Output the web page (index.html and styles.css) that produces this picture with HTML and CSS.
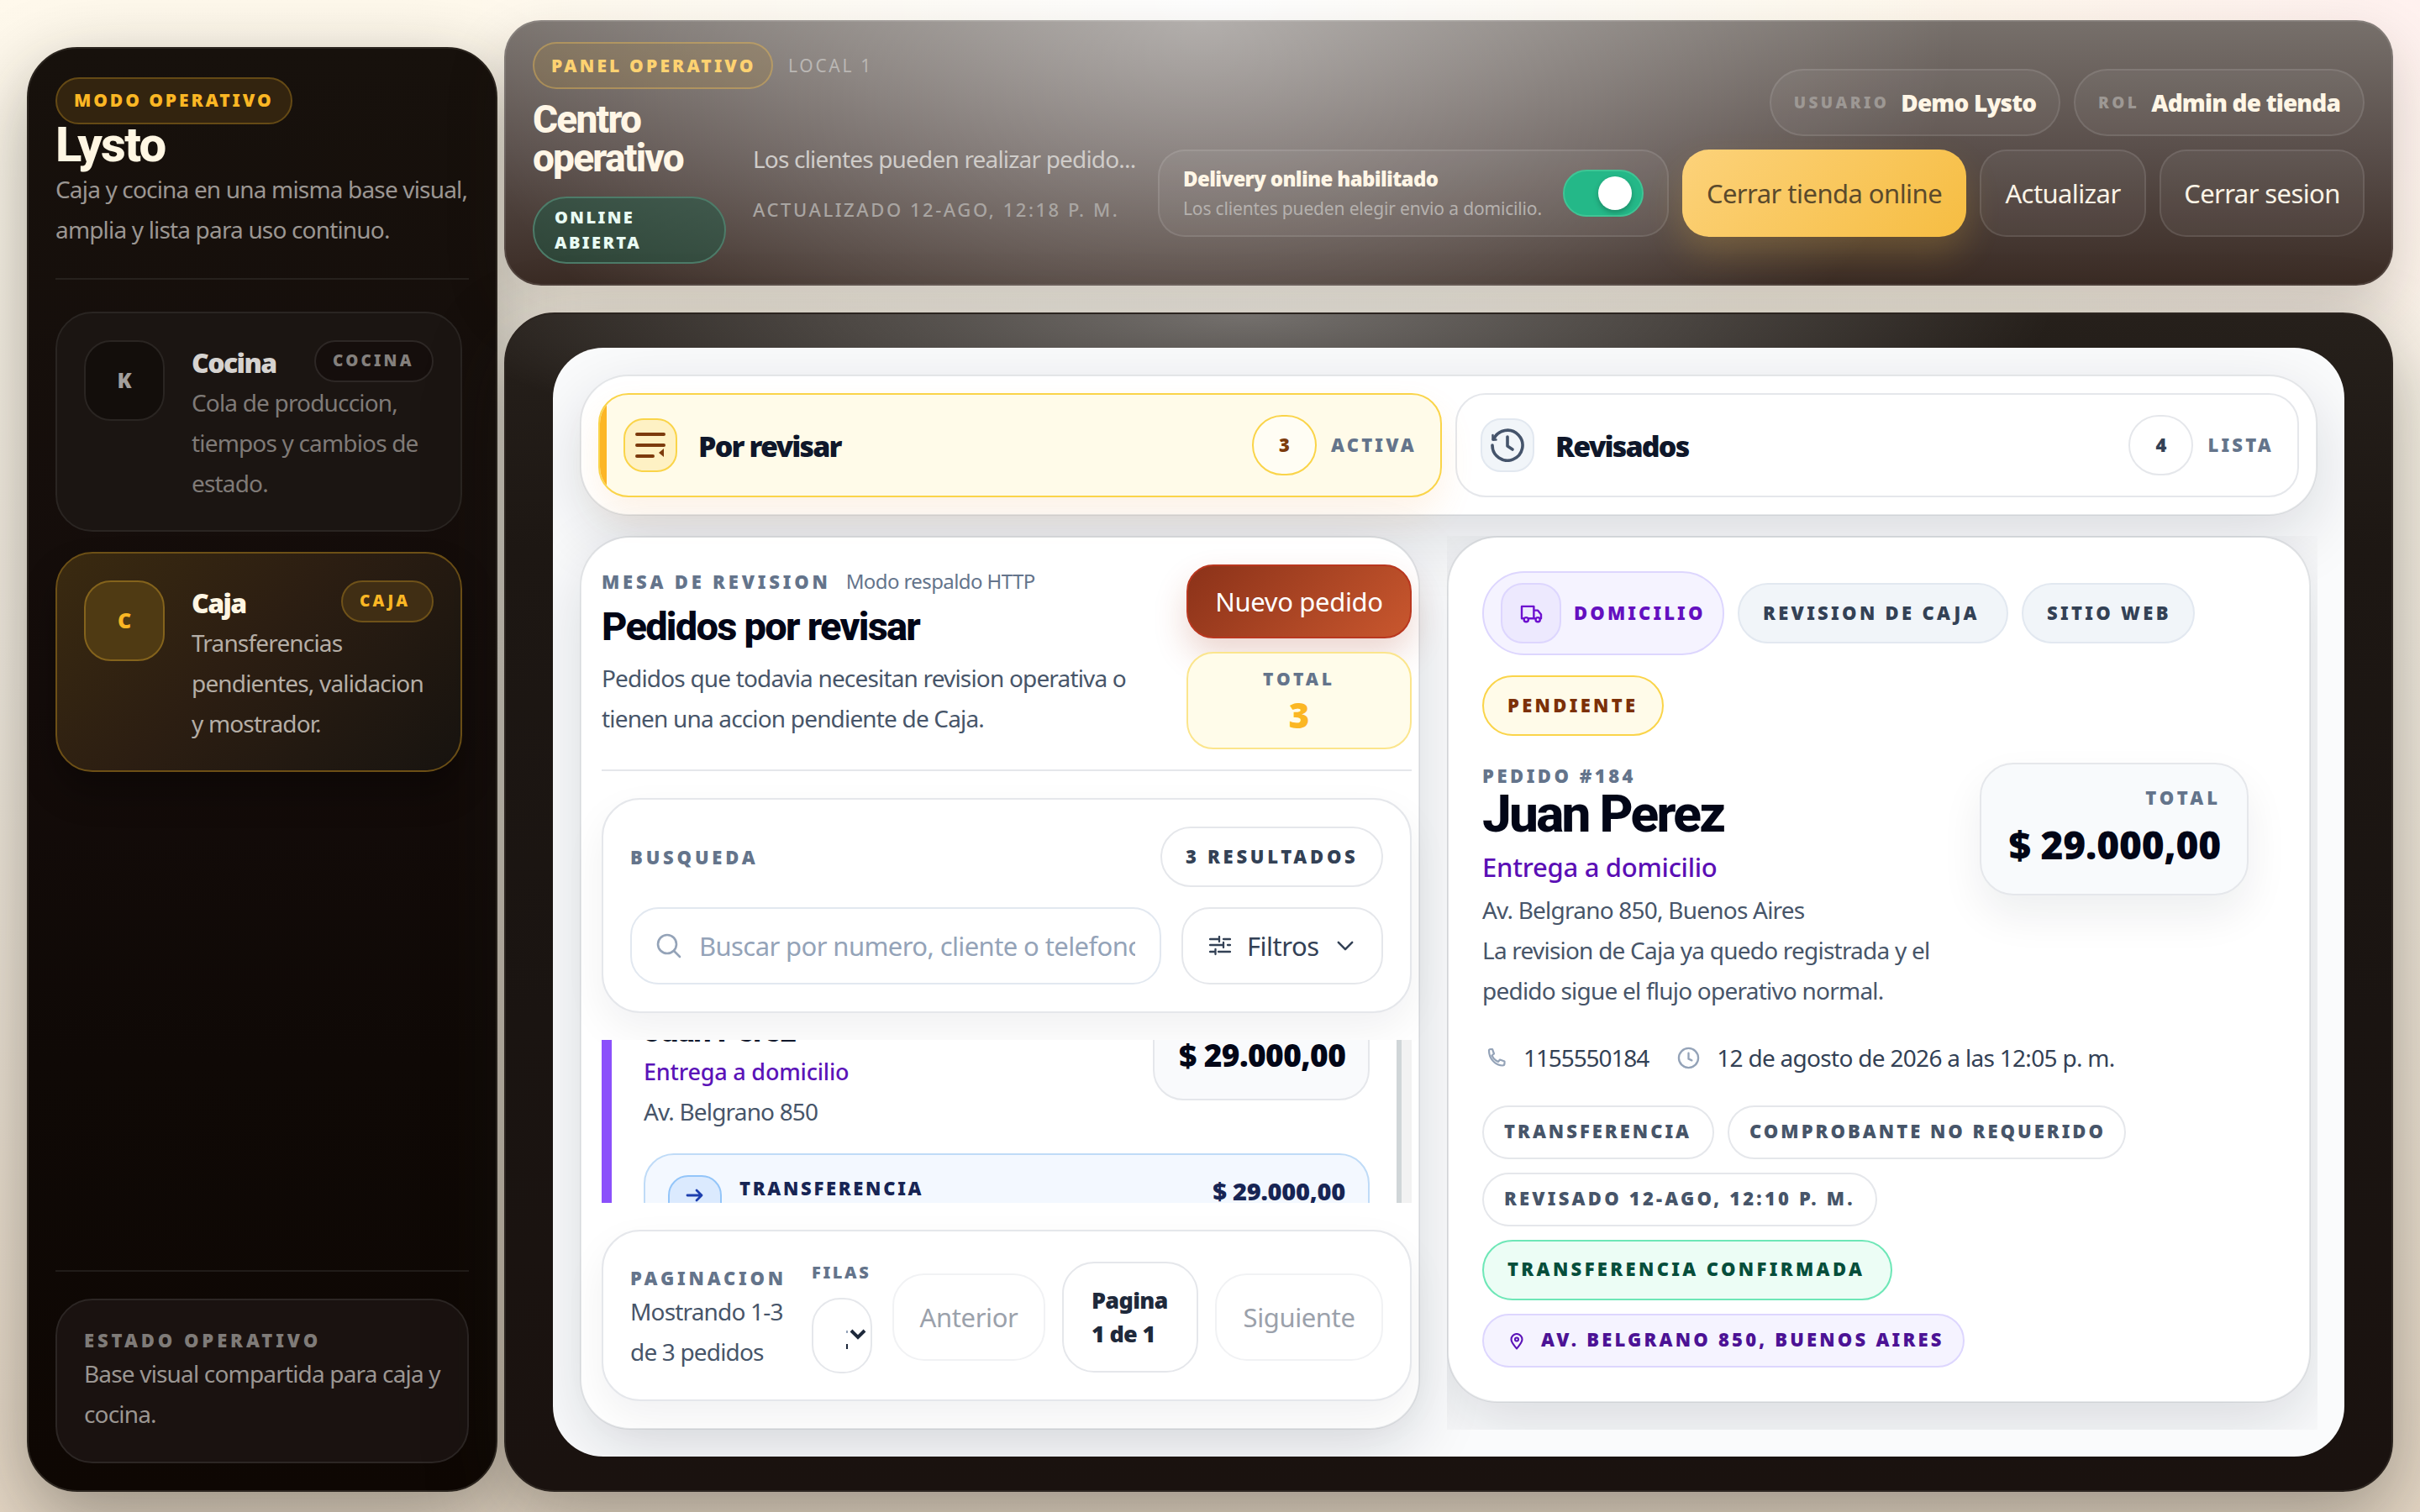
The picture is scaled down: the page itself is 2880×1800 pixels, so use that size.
FILE: index.html
```html
<!DOCTYPE html>
<html lang="es">
<head>
<meta charset="UTF-8">
<meta name="viewport" content="width=device-width, initial-scale=1.0">
<title>Lysto - Caja</title>
<link rel="stylesheet" href="styles.css">
</head>
<body>

<div class="shell">
    <aside class="sidebar">
        <div class="brand">
            <span class="badge badge-gold">MODO OPERATIVO</span>
            <h1>Lysto</h1>
            <p class="copy">Caja y cocina en una misma base visual,<br>amplia y lista para uso continuo.</p>
        </div>

        <nav class="nav">
            <a class="nav-card">
                <span class="nav-icon">K</span>
                <div class="nav-body">
                    <div class="nav-head"><strong>Cocina</strong><span class="nav-chip">COCINA</span></div>
                    <p class="copy">Cola de produccion,<br>tiempos y cambios de<br>estado.</p>
                </div>
            </a>
            <a class="nav-card active">
                <span class="nav-icon">C</span>
                <div class="nav-body">
                    <div class="nav-head"><strong>Caja</strong><span class="nav-chip">CAJA</span></div>
                    <p class="copy">Transferencias<br>pendientes, validacion<br>y mostrador.</p>
                </div>
            </a>
        </nav>

        <div class="side-footer">
            <div class="side-status">
                <div class="side-label">ESTADO OPERATIVO</div>
                <p class="copy">Base visual compartida para caja y<br>cocina.</p>
            </div>
        </div>
    </aside>

    <div class="content">
        <header class="topbar">
            <div class="top-left">
                <div class="top-badges">
                    <span class="badge badge-panel">PANEL OPERATIVO</span>
                    <span class="local">LOCAL 1</span>
                </div>
                <div class="top-info">
                    <div class="top-title">
                        <h2>Centro<br>operativo</h2>
                        <div class="online">ONLINE<br>ABIERTA</div>
                    </div>
                    <div class="top-status">
                        <p class="top-text">Los clientes pueden realizar pedido...</p>
                        <p class="top-updated">ACTUALIZADO 12-AGO, 12:18 P. M.</p>
                    </div>
                </div>
            </div>
            <div class="top-right">
                <div class="top-row">
                    <div class="who"><span>USUARIO</span><strong>Demo Lysto</strong></div>
                    <div class="who"><span>ROL</span><strong>Admin de tienda</strong></div>
                </div>
                <div class="top-row">
                    <div class="delivery">
                        <div>
                            <strong>Delivery online habilitado</strong>
                            <p>Los clientes pueden elegir envio a domicilio.</p>
                        </div>
                        <span class="toggle"></span>
                    </div>
                    <button class="top-btn btn-gold">Cerrar tienda online</button>
                    <button class="top-btn btn-refresh">Actualizar</button>
                    <button class="top-btn btn-logout">Cerrar sesion</button>
                </div>
            </div>
        </header>

        <main class="main">
            <div class="board">
                <div class="tabs">
                    <div class="tab tab-active">
                        <span class="tab-icon">
                            <svg width="40" height="40" viewBox="0 0 40 40" fill="none" stroke="#7c3a0c" stroke-width="4" stroke-linecap="round"><path d="M4 7h32M4 20h32M4 33h19"/><path d="M36 24v10l-6-5z" fill="#7c3a0c" stroke="none"/></svg>
                        </span>
                        <strong>Por revisar</strong>
                        <span class="count">3</span>
                        <span class="tab-label">ACTIVA</span>
                    </div>
                    <div class="tab">
                        <span class="tab-icon">
                            <svg width="40" height="40" viewBox="0 0 40 40" fill="none" stroke="#45546b" stroke-width="3.6" stroke-linecap="round" stroke-linejoin="round"><path d="M3.5 13A18 18 0 1 1 2 20"/><path d="M2.5 8v5.500h4" stroke-width="2.500"/><path d="M20 10v11l6 4"/></svg>
                        </span>
                        <strong>Revisados</strong>
                        <span class="count">4</span>
                        <span class="tab-label">LISTA</span>
                    </div>
                </div>

                <div class="panels">
                    <section class="panel queue">
                        <div class="queue-head">
                            <div class="queue-intro">
                                <div class="eyebrow-row"><span class="eyebrow">MESA DE REVISION</span><span class="mode">Modo respaldo HTTP</span></div>
                                <h3>Pedidos por revisar</h3>
                                <p class="copy">Pedidos que todavia necesitan revision operativa o<br>tienen una accion pendiente de Caja.</p>
                            </div>
                            <div class="queue-side">
                                <button class="btn-new">Nuevo pedido</button>
                                <div class="total-mini"><span>TOTAL</span><strong>3</strong></div>
                            </div>
                        </div>

                        <div class="search-card">
                            <div class="search-top">
                                <span class="eyebrow">BUSQUEDA</span>
                                <span class="results">3 RESULTADOS</span>
                            </div>
                            <div class="search-row">
                                <div class="search-input">
                                    <svg width="30" height="30" viewBox="0 0 30 30" fill="none" stroke="#94a3b8" stroke-width="2.600" stroke-linecap="round"><circle cx="13" cy="13" r="11"/><path d="M21.500 21.500L28 28"/></svg>
                                    <span>Buscar por numero, cliente o telefono</span>
                                </div>
                                <button class="btn-filter">
                                    <svg width="26" height="24" viewBox="0 0 26 24" fill="none" stroke="#334155" stroke-width="2.300" stroke-linecap="round"><path d="M1 4h11M17 4h8M12 1v6M1 11h16M22 11h3M17 8v6M1 19h5M11 19h14M7.500 16v6"/></svg>
                                    <span>Filtros</span>
                                    <svg width="20" height="13" viewBox="0 0 22 14" fill="none" stroke="#334155" stroke-width="2.800" stroke-linecap="round" stroke-linejoin="round"><path d="M2 2l9 9 9-9"/></svg>
                                </button>
                            </div>
                        </div>

                        <div class="list">
                            <article class="order">
                                <div class="order-top">
                                    <div>
                                        <h4>Juan Perez</h4>
                                        <p class="order-type">Entrega a domicilio</p>
                                        <p class="copy">Av. Belgrano 850</p>
                                    </div>
                                    <div class="order-price">$ 29.000,00</div>
                                </div>
                                <div class="transfer">
                                    <span class="transfer-icon">
                                        <svg width="22" height="18" viewBox="0 0 22 18" fill="none" stroke="#1d3fae" stroke-width="2.800" stroke-linecap="round" stroke-linejoin="round"><path d="M2 9h17M13 3l6 6-6 6"/></svg>
                                    </span>
                                    <span class="transfer-name">TRANSFERENCIA</span>
                                    <span class="transfer-price">$ 29.000,00</span>
                                </div>
                            </article>
                        </div>

                        <div class="pager">
                            <div class="pager-info">
                                <div class="eyebrow">PAGINACION</div>
                                <p class="copy">Mostrando 1-3<br>de 3 pedidos</p>
                            </div>
                            <div class="rows">
                                <span>FILAS</span>
                                <div class="rows-select">
                                    <i></i>
                                    <svg width="20" height="13" viewBox="0 0 20 13" fill="none" stroke="#1e293b" stroke-width="4"><path d="M2 2l8 8 8-8"/></svg>
                                </div>
                            </div>
                            <button class="page-btn btn-prev">Anterior</button>
                            <div class="page-now">Pagina<br>1 de 1</div>
                            <button class="page-btn btn-next">Siguiente</button>
                        </div>
                    </section>

                    <div class="detail-wrap">
                        <section class="panel detail">
                            <div class="tags">
                                <span class="tag tag-home">
                                    <span class="tag-icon">
                                        <svg width="27" height="23" viewBox="0 0 28 24" fill="none" stroke="#6d10cf" stroke-width="2.500" stroke-linejoin="round"><path d="M5 18H2V3h15v15h-7M17 8h5l4 5v5h-1M17 18h2"/><circle cx="7.500" cy="19.500" r="2.700"/><circle cx="22" cy="19.500" r="2.700"/></svg>
                                    </span>
                                    <b>DOMICILIO</b>
                                </span>
                                <span class="tag tag-review"><b>REVISION DE CAJA</b></span>
                                <span class="tag tag-web"><b>SITIO WEB</b></span>
                                <span class="tag tag-pending"><b>PENDIENTE</b></span>
                            </div>

                            <div class="detail-top">
                                <div class="detail-name">
                                    <div class="order-number">PEDIDO #184</div>
                                    <h3>Juan Perez</h3>
                                    <p class="detail-type">Entrega a domicilio</p>
                                    <p class="copy">Av. Belgrano 850, Buenos Aires<br>La revision de Caja ya quedo registrada y el<br>pedido sigue el flujo operativo normal.</p>
                                </div>
                                <div class="detail-total"><span>TOTAL</span><strong>$ 29.000,00</strong></div>
                            </div>

                            <div class="meta">
                                <svg width="24" height="24" viewBox="0 0 24 24" fill="none" stroke="#94a3b8" stroke-width="2.200" stroke-linejoin="round"><path d="M3 3.500C3 2.500 4 2 5 2h2l2 5.500-2.500 2C8 13 10.500 15.500 14 17l2-2.500 5.500 2V19c0 1.500-1 2.500-2.500 2.500C10 21 3 13 3 3.500z"/></svg>
                                <span class="phone">1155550184</span>
                                <svg width="27" height="27" viewBox="0 0 28 28" fill="none" stroke="#94a3b8" stroke-width="2.400" stroke-linecap="round"><circle cx="14" cy="14" r="12"/><path d="M14 8v7l4 2"/></svg>
                                <span class="date">12 de agosto de 2026 a las 12:05 p. m.</span>
                            </div>

                            <div class="chips">
                                <span class="chip chip-transfer">TRANSFERENCIA</span>
                                <span class="chip chip-proof">COMPROBANTE NO REQUERIDO</span>
                                <span class="chip chip-reviewed">REVISADO 12-AGO, 12:10 P. M.</span>
                                <span class="chip chip-ok">TRANSFERENCIA CONFIRMADA</span>
                                <span class="chip chip-address">
                                    <svg width="16" height="20" viewBox="0 0 16 20" fill="none" stroke="#5b13b8" stroke-width="2.100" stroke-linejoin="round"><path d="M8 18.500C4 13.500 1.500 11 1.500 7.500a6.500 6.500 0 0 1 13 0C14.500 11 12 13.500 8 18.500z"/><circle cx="8" cy="7.500" r="2"/></svg>
                                    AV. BELGRANO 850, BUENOS AIRES
                                </span>
                            </div>
                        </section>
                    </div>
                </div>
            </div>
        </main>
    </div>
</div>

</body>
</html>
```
FILE: styles.css
```css
* {
  box-sizing: border-box;
  margin: 0;
  padding: 0;
}

body {
  width: 2880px;
  height: 1800px;
  overflow: hidden;
  font-family: "Noto Sans", "Open Sans", sans-serif;
  color: #0f172a;
  background:
    radial-gradient(ellipse 900px 500px at 1450px 0, #ffffff, rgba(255, 255, 255, 0)),
    radial-gradient(ellipse 700px 500px at 2880px 0, #fff1ef, rgba(255, 241, 239, 0)),
    linear-gradient(180deg, #fff9ec 0%, #f2ebdf 45%, #e4d6c4 100%);
}

button {
  font-family: inherit;
  border: none;
}

h1, h2, h3, h4 {
  font-family: Roboto, sans-serif;
  font-weight: 800;
}

.shell {
  display: grid;
  grid-template-columns: 560px 2248px;
  gap: 8px;
  height: 1800px;
  padding: 24px 32px;
}

.copy {
  font-size: 28px;
  line-height: 48px;
  letter-spacing: -0.830px;
  white-space: nowrap;
}

/* sidebar */
.sidebar {
  display: flex;
  flex-direction: column;
  margin-top: 32px;
  padding: 34px 32px 32px;
  border: 2px solid #2b251f;
  border-radius: 60px;
  background: linear-gradient(180deg, #17110c 0%, #140c0a 45%, #0f0906 70%, #0e0703 100%);
  box-shadow: 0 30px 90px rgba(25, 25, 20, 0.38);
  color: #9b9692;
}

.brand {
  padding-bottom: 34px;
  border-bottom: 2px solid #26211d;
}

.badge {
  display: flex;
  align-items: center;
  height: 56px;
  border: 2px solid;
  border-radius: 28px;
  font-size: 21px;
  font-weight: 900;
  white-space: nowrap;
}

.badge-gold {
  width: 282px;
  padding: 0 0 3px 20px;
  border-color: #654a15;
  background: #33240f;
  color: #fbb724;
  letter-spacing: 2.900px;
}

.brand h1 {
  margin-top: -5px;
  font-size: 58px;
  line-height: 58px;
  letter-spacing: -1.700px;
  color: #fff6e3;
}

.nav {
  display: flex;
  flex-direction: column;
  gap: 24px;
  margin: 38px 8px 0 0;
}

.nav-card {
  display: flex;
  gap: 32px;
  height: 262px;
  padding: 32px;
  border: 2px solid #2a2522;
  border-radius: 44px;
  background: #1b1512;
  color: #7f7a77;
}

.nav-icon {
  display: flex;
  align-items: center;
  justify-content: center;
  width: 96px;
  height: 96px;
  padding-bottom: 2px;
  border: 2px solid #2a2522;
  border-radius: 32px;
  background: #130e0b;
  color: #a3a09d;
  font-size: 25px;
  font-weight: 900;
}

.nav-body {
  flex: 1;
}

.nav-head {
  display: flex;
  align-items: center;
  justify-content: space-between;
  height: 50px;
}

.nav-head strong {
  padding-top: 3px;
  font-size: 32px;
  font-weight: 900;
  letter-spacing: -1.600px;
  color: #d6d3d0;
}

.nav-chip {
  display: flex;
  align-items: center;
  width: 142px;
  height: 50px;
  padding: 0 0 2px 20px;
  border: 2px solid #2d2725;
  border-radius: 25px;
  background: #150e0c;
  font-size: 19px;
  font-weight: 900;
  letter-spacing: 3.200px;
  color: #84807d;
}

.nav-card.active {
  border-color: #6d5016;
  background: linear-gradient(135deg, #3a2a10 0%, #2c1e12 45%, #181410 100%);
  box-shadow: 0 24px 40px rgba(0, 0, 0, 0.3);
  color: #b5aea6;
}

.active .nav-icon {
  border-color: #84631c;
  background: #4f3a13;
  color: #fbb724;
}

.active strong {
  color: #fff6e3;
}

.active .nav-chip {
  width: 110px;
  border-color: #6f5219;
  background: #402e14;
  color: #fbb724;
}

.side-footer {
  margin-top: auto;
  padding-top: 32px;
  border-top: 2px solid #211c19;
}

.side-status {
  height: 196px;
  padding: 32px;
  border: 2px solid #2c2624;
  border-radius: 44px;
  background: #1a1210;
}

.side-label {
  font-size: 22px;
  line-height: 31px;
  font-weight: 900;
  letter-spacing: 3.900px;
  white-space: nowrap;
  color: #7f7b78;
}

/* top bar */
.content {
  display: flex;
  flex-direction: column;
  gap: 32px;
}

.topbar {
  display: flex;
  align-items: center;
  justify-content: space-between;
  height: 316px;
  padding: 24px 32px;
  border: 2px solid rgba(255, 255, 255, 0.1);
  border-radius: 44px;
  background:
    radial-gradient(ellipse 900px 560px at 830px 0, rgba(255, 255, 255, 0.44), rgba(255, 255, 255, 0)),
    linear-gradient(180deg, #77706b 0%, #594e4a 50%, #3a2b24 100%);
  background-clip: border-box;
  background-origin: border-box;
  box-shadow: 0 30px 70px rgba(40, 30, 20, 0.2);
}

.top-left {
  width: 720px;
}

.top-badges {
  display: flex;
  align-items: center;
  gap: 18px;
}

.badge-panel {
  width: 286px;
  padding-left: 20px;
  border-color: rgba(251, 200, 90, 0.35);
  background: rgba(160, 130, 70, 0.28);
  color: #fdd271;
  letter-spacing: 3.150px;
}

.local {
  font-size: 21px;
  letter-spacing: 2.700px;
  color: #bab7b4;
}

.top-info {
  display: flex;
  gap: 32px;
}

.top-title {
  flex: none;
  width: 230px;
  padding-top: 13px;
}

.top-title h2 {
  font-size: 46px;
  line-height: 46px;
  letter-spacing: -1.800px;
  color: #fff6e6;
}

.online {
  height: 80px;
  margin-top: 23px;
  padding: 8px 24px;
  border: 2px solid #4d7c69;
  border-radius: 40px;
  background: rgba(30, 90, 70, 0.5);
  font-size: 20px;
  line-height: 30px;
  font-weight: 900;
  letter-spacing: 2.400px;
  color: #e9fbf3;
}

.top-status {
  padding-top: 63px;
  white-space: nowrap;
}

.top-text {
  font-size: 28px;
  line-height: 40px;
  letter-spacing: -0.820px;
  color: #cfccc9;
}

.top-updated {
  margin-top: 24px;
  font-size: 22px;
  line-height: 32px;
  font-weight: 500;
  letter-spacing: 2.550px;
  color: #a9a5a2;
}

.top-right {
  display: flex;
  flex-direction: column;
  gap: 16px;
}

.top-row {
  display: flex;
  justify-content: flex-end;
  gap: 16px;
}

.who {
  display: flex;
  align-items: center;
  justify-content: center;
  gap: 14px;
  width: 346px;
  height: 80px;
  border: 2px solid rgba(255, 255, 255, 0.1);
  border-radius: 40px;
  background: rgba(255, 255, 255, 0.05);
  white-space: nowrap;
}

.who span {
  font-size: 19px;
  font-weight: 900;
  letter-spacing: 3.400px;
  color: #9d9894;
}

.who strong {
  font-size: 28px;
  font-weight: 900;
  letter-spacing: -0.850px;
  color: #fff6e6;
}

.delivery {
  display: flex;
  align-items: center;
  justify-content: space-between;
  width: 608px;
  height: 104px;
  padding: 0 28px;
  border: 2px solid rgba(255, 255, 255, 0.1);
  border-radius: 32px;
  background: rgba(255, 255, 255, 0.05);
  white-space: nowrap;
}

.delivery strong {
  display: block;
  font-size: 24px;
  line-height: 36px;
  font-weight: 900;
  letter-spacing: -0.650px;
  color: #fff6e6;
}

.delivery p {
  font-size: 21px;
  line-height: 34px;
  letter-spacing: -0.160px;
  color: #b5b1ae;
}

.toggle {
  width: 96px;
  height: 56px;
  padding: 6px 12px;
  border: 2px solid #3fc595;
  border-radius: 28px;
  background: #24b888;
}

.toggle::after {
  content: "";
  display: block;
  width: 40px;
  height: 40px;
  margin-left: auto;
  border-radius: 50%;
  background: #ffffff;
  box-shadow: 0 3px 6px rgba(0, 0, 0, 0.25);
}

.top-btn {
  height: 104px;
  border: 2px solid rgba(255, 255, 255, 0.1);
  border-radius: 32px;
  background: rgba(255, 255, 255, 0.05);
  font-size: 31px;
  letter-spacing: -0.600px;
  white-space: nowrap;
  color: #fbf3e6;
}

.btn-gold {
  width: 338px;
  border: none;
  background: linear-gradient(135deg, #fcd27a 0%, #f6bd42 100%);
  box-shadow: 0 20px 40px rgba(250, 190, 60, 0.2);
  letter-spacing: -0.550px;
  color: #5b4a2c;
}

.btn-refresh {
  width: 198px;
}

.btn-logout {
  width: 244px;
}

/* board */
.main {
  height: 1404px;
  padding: 40px 56px;
  border: 2px solid #2c2520;
  border-radius: 60px;
  background:
    radial-gradient(ellipse 960px 190px at 880px 0, rgba(255, 255, 255, 0.36), rgba(255, 255, 255, 0)),
    linear-gradient(180deg, #26201b 0%, #1d1713 20%, #1a1411 60%, #1a120f 100%);
  box-shadow: 0 30px 90px rgba(25, 25, 20, 0.36);
}

.board {
  height: 1320px;
  padding: 32px;
  overflow: hidden;
  border-radius: 60px;
  background: #fafbfc;
}

.tabs {
  display: flex;
  gap: 16px;
  height: 168px;
  padding: 20px;
  border: 2px solid rgba(15, 23, 42, 0.08);
  border-radius: 58px;
  background: #ffffff;
  background-clip: padding-box;
  box-shadow: 0 24px 80px rgba(15, 23, 42, 0.14);
}

.tab {
  display: flex;
  align-items: center;
  width: 1004px;
  height: 124px;
  padding: 0 28px;
  border: 2px solid #e5e7eb;
  border-radius: 36px;
}

.tab-active {
  position: relative;
  overflow: hidden;
  border-color: #fad449;
  background: #fffbe9;
  box-shadow: 0 20px 40px rgba(250, 160, 60, 0.12);
}

.tab-active::before {
  content: "";
  position: absolute;
  left: 0;
  top: 0;
  bottom: 0;
  width: 8px;
  background: #fcb626;
}

.tab-icon {
  display: flex;
  align-items: center;
  justify-content: center;
  width: 64px;
  height: 64px;
  border: 2px solid #e2e8f0;
  border-radius: 24px;
  background: #f1f5f9;
}

.tab-active .tab-icon {
  border-color: #fad449;
  background: #fef1c4;
}

.tab strong {
  margin-left: 25px;
  padding-top: 2px;
  font-size: 34px;
  font-weight: 900;
  letter-spacing: -1.850px;
}

.count {
  display: flex;
  align-items: center;
  justify-content: center;
  width: 77px;
  height: 72px;
  margin-left: auto;
  padding-bottom: 2px;
  border: 2px solid #e5e7eb;
  border-radius: 38px;
  background: #ffffff;
  font-size: 22px;
  font-weight: 900;
  color: #334155;
}

.tab-active .count {
  border-color: #fad449;
  background: #fffdf4;
  color: #7c3a0c;
}

.tab-label {
  margin-left: 17px;
  padding-bottom: 2px;
  font-size: 22px;
  font-weight: 900;
  letter-spacing: 3.200px;
  color: #64748b;
}

.panels {
  display: grid;
  grid-template-columns: 1000px 1036px;
  gap: 32px;
  margin-top: 24px;
}

.panel {
  border: 2px solid rgba(15, 23, 42, 0.08);
  border-radius: 60px;
  background: #ffffff;
  background-clip: padding-box;
  box-shadow: 0 24px 80px rgba(15, 23, 42, 0.14);
}

.eyebrow {
  font-size: 22px;
  font-weight: 900;
  letter-spacing: 3.800px;
  white-space: nowrap;
  color: #64748b;
}

/* review queue */
.queue {
  height: 1064px;
  padding: 32px 8px 0 24px;
}

.queue-head {
  display: flex;
  justify-content: space-between;
  height: 246px;
  border-bottom: 2px solid #e5e7eb;
}

.queue .copy {
  color: #475569;
}

.eyebrow-row {
  display: flex;
  align-items: baseline;
  gap: 18px;
  line-height: 40px;
}

.mode {
  font-size: 24px;
  letter-spacing: -0.600px;
  color: #64748b;
}

.queue-intro h3 {
  margin: 6px 0 9px;
  font-size: 47px;
  line-height: 56px;
  letter-spacing: -1.750px;
  color: #020617;
}

.queue-side {
  width: 268px;
}

.btn-new {
  display: block;
  width: 268px;
  height: 88px;
  border: 2px solid #b9371f;
  border-radius: 32px;
  background: linear-gradient(135deg, #8b3219 0%, #c9572e 100%);
  box-shadow: 0 20px 40px rgba(160, 50, 20, 0.2);
  font-size: 31px;
  letter-spacing: -0.350px;
  color: #ffffff;
}

.total-mini {
  display: flex;
  flex-direction: column;
  align-items: center;
  height: 116px;
  margin-top: 16px;
  padding-top: 13px;
  border: 2px solid #fbe58c;
  border-radius: 32px;
  background: #fffcea;
}

.total-mini span {
  font-size: 21px;
  line-height: 34px;
  font-weight: 900;
  letter-spacing: 3.900px;
  color: #64748b;
}

.total-mini strong {
  font-size: 42px;
  line-height: 52px;
  font-weight: 900;
  color: #fbb724;
}

.search-card {
  height: 256px;
  margin-top: 32px;
  padding: 32px;
  border: 2px solid #e5e7eb;
  border-radius: 46px;
  background: #ffffff;
  box-shadow: 0 20px 50px rgba(15, 23, 42, 0.06);
}

.search-top {
  display: flex;
  align-items: center;
  justify-content: space-between;
}

.results {
  display: flex;
  align-items: center;
  width: 265px;
  height: 72px;
  padding: 0 0 2px 28px;
  border: 2px solid #e5e7eb;
  border-radius: 36px;
  font-size: 22px;
  font-weight: 900;
  letter-spacing: 3.700px;
  white-space: nowrap;
  color: #334155;
}

.search-row {
  display: flex;
  justify-content: space-between;
  margin-top: 24px;
}

.search-input {
  display: flex;
  align-items: center;
  gap: 21px;
  width: 632px;
  height: 92px;
  padding: 0 29px;
  border: 2px solid #e2e8f0;
  border-radius: 34px;
}

.search-input svg {
  flex: none;
}

.search-input span {
  overflow: hidden;
  font-size: 31px;
  letter-spacing: -0.600px;
  white-space: nowrap;
  color: #94a3b8;
}

.btn-filter {
  display: flex;
  align-items: center;
  width: 240px;
  height: 92px;
  padding-left: 31px;
  border: 2px solid #e5e7eb;
  border-radius: 34px;
  background: #ffffff;
  font-size: 31px;
  letter-spacing: -0.500px;
  color: #334155;
}

.btn-filter span {
  margin: 0 21px 0 19px;
}

.list {
  height: 194px;
  margin-top: 32px;
  overflow: hidden;
  background: linear-gradient(90deg, #ffffff 98%, #f2f2f2 98%);
}

.order {
  width: 952px;
  height: 400px;
  margin-top: -59px;
  padding: 0 32px 0 38px;
  border-left: 12px solid #8b50fb;
  border-right: 6px solid #d0d6d8;
  background: #ffffff;
}

.order-top {
  display: flex;
  justify-content: space-between;
  height: 168px;
}

.order h4 {
  margin-top: 25px;
  font-size: 38px;
  line-height: 46px;
  letter-spacing: -1.200px;
}

.order-type {
  margin: 4px 0 1px;
  font-size: 27px;
  line-height: 44px;
  font-weight: 500;
  letter-spacing: -0.200px;
  color: #5b13b8;
}

.order-price {
  width: 258px;
  height: 131px;
  padding: 57px 0 0 29px;
  border: 2px solid #e5e7eb;
  border-radius: 36px;
  background: #f9fafc;
  font-size: 37px;
  line-height: 36px;
  font-weight: 900;
  letter-spacing: -0.600px;
  white-space: nowrap;
  color: #020617;
}

.transfer {
  display: flex;
  height: 200px;
  margin-top: 26px;
  padding: 24px 27px;
  border: 2px solid #bfdbf7;
  border-radius: 36px;
  background: #f3f8ff;
}

.transfer-icon {
  display: flex;
  justify-content: center;
  width: 64px;
  height: 64px;
  padding-top: 13px;
  border: 2px solid #93c5f9;
  border-radius: 24px;
  background: #dbeafe;
}

.transfer-name {
  margin-left: 21px;
  font-size: 22px;
  line-height: 31px;
  font-weight: 900;
  letter-spacing: 2.700px;
  color: #172554;
}

.transfer-price {
  margin-left: auto;
  font-size: 29px;
  line-height: 38px;
  font-weight: 900;
  letter-spacing: -0.250px;
  color: #172554;
}

.pager {
  display: flex;
  align-items: center;
  height: 204px;
  margin-top: 32px;
  padding: 3px 32px 0;
  border: 2px solid #e5e7eb;
  border-radius: 46px;
  background: #ffffff;
  box-shadow: 0 20px 50px rgba(15, 23, 42, 0.06);
}

.pager-info {
  width: 216px;
  padding-top: 2px;
}

.pager-info .eyebrow {
  line-height: 32px;
}

.rows {
  width: 72px;
}

.rows span {
  display: block;
  font-size: 20px;
  line-height: 28px;
  font-weight: 900;
  letter-spacing: 2.600px;
  color: #64748b;
}

.rows-select {
  display: flex;
  align-items: center;
  height: 90px;
  margin-top: 16px;
  padding-left: 39px;
  border: 2px solid #e5e7eb;
  border-radius: 34px;
}

.rows-select i {
  width: 2px;
  height: 22px;
  margin-top: 10px;
  border-top: 3px solid #94a3b8;
  border-bottom: 6px solid #1e293b;
}

.rows-select svg {
  margin: -3px 0 0 2px;
}

.page-btn {
  height: 104px;
  border: 2px solid #f1f2f4;
  border-radius: 38px;
  background: #ffffff;
  font-size: 31px;
  letter-spacing: -0.400px;
  color: #9ba1ab;
}

.btn-prev {
  width: 182px;
  margin-left: 24px;
}

.page-now {
  width: 162px;
  height: 132px;
  margin: 0 20px;
  padding: 24px 0 0 33px;
  border: 2px solid #e5e7eb;
  border-radius: 38px;
  font-size: 27px;
  line-height: 40px;
  font-weight: 900;
  letter-spacing: -0.700px;
  white-space: nowrap;
  color: #1e293b;
}

.btn-next {
  width: 200px;
}

/* order detail */
.detail-wrap {
  height: 1064px;
  overflow: hidden;
}

.detail {
  width: 1028px;
  height: 1032px;
  padding: 40px;
}

.tags {
  display: flex;
  flex-wrap: wrap;
  align-items: center;
  gap: 24px 16px;
}

.tag {
  display: flex;
  align-items: center;
  height: 72px;
  padding: 0 0 2px 28px;
  border: 2px solid #e2e8f0;
  border-radius: 36px;
  background: #f1f5f9;
  font-size: 22px;
  letter-spacing: 3.300px;
  white-space: nowrap;
  color: #334155;
}

.tag b {
  font-weight: 900;
}

.tag-home {
  width: 288px;
  height: 100px;
  padding: 0 0 0 20px;
  border-color: #ddd6fe;
  border-radius: 50px;
  background: #f5f3ff;
  letter-spacing: 3.100px;
  color: #6410c0;
}

.tag-home b {
  padding-bottom: 2px;
}

.tag-icon {
  display: flex;
  align-items: center;
  justify-content: center;
  width: 72px;
  height: 72px;
  margin-right: 15px;
  border: 2px solid #ddd6fe;
  border-radius: 26px;
  background: #ede9fe;
}

.tag-review {
  width: 322px;
}

.tag-web {
  width: 206px;
}

.tag-pending {
  width: 216px;
  border-color: #fad449;
  background: #fffbe9;
  color: #7c3008;
}

.detail-top {
  display: flex;
  margin-top: 32px;
}

.detail-name {
  width: 592px;
}

.order-number {
  font-size: 22px;
  line-height: 30px;
  font-weight: 900;
  letter-spacing: 3.500px;
  color: #64748b;
}

.detail-name h3 {
  font-size: 62px;
  line-height: 62px;
  letter-spacing: -2.700px;
  color: #020617;
}

.detail-type {
  margin: 6px 0 1px;
  font-size: 31px;
  line-height: 52px;
  font-weight: 500;
  letter-spacing: -0.280px;
  color: #5b0fb5;
}

.detail .copy {
  letter-spacing: -0.780px;
  color: #475569;
}

.detail-total {
  width: 320px;
  height: 158px;
  padding: 24px 31px 0 0;
  border: 2px solid #e5e7eb;
  border-radius: 40px;
  background: #f8fafc;
  box-shadow: 0 24px 50px rgba(15, 23, 42, 0.07);
  text-align: right;
  white-space: nowrap;
}

.detail-total span {
  display: block;
  font-size: 22px;
  line-height: 30px;
  font-weight: 900;
  letter-spacing: 4px;
  color: #64748b;
}

.detail-total strong {
  font-size: 46px;
  line-height: 82px;
  font-weight: 900;
  letter-spacing: -0.200px;
  color: #020617;
}

.meta {
  display: flex;
  align-items: center;
  height: 40px;
  margin-top: 36px;
  padding-left: 5px;
  font-size: 28px;
  letter-spacing: -0.700px;
  white-space: nowrap;
  color: #334155;
}

.phone {
  margin: 0 34px 0 20px;
  letter-spacing: -1.100px;
}

.date {
  margin-left: 20px;
}

.chips {
  display: flex;
  flex-wrap: wrap;
  gap: 16px;
  width: 800px;
  margin-top: 37px;
}

.chip {
  display: flex;
  align-items: center;
  height: 64px;
  padding: 0 0 5px 24px;
  border: 2px solid #e5e7eb;
  border-radius: 32px;
  font-size: 22px;
  font-weight: 900;
  letter-spacing: 3px;
  white-space: nowrap;
  color: #475569;
}

.chip-transfer {
  width: 276px;
}

.chip-proof {
  width: 474px;
}

.chip-reviewed {
  width: 470px;
  margin-right: 200px;
  letter-spacing: 3.200px;
}

.chip-ok {
  width: 488px;
  height: 72px;
  padding-left: 28px;
  margin-right: 200px;
  border-color: #6ee7b7;
  border-radius: 36px;
  background: #ecfdf5;
  letter-spacing: 3.350px;
  color: #064e3b;
}

.chip-address {
  width: 574px;
  padding-left: 31px;
  border-color: #ddd6fe;
  background: #f5f3ff;
  letter-spacing: 3.200px;
  color: #4c1295;
}

.chip-address svg {
  margin: 6px 21px 0 0;
}
```
